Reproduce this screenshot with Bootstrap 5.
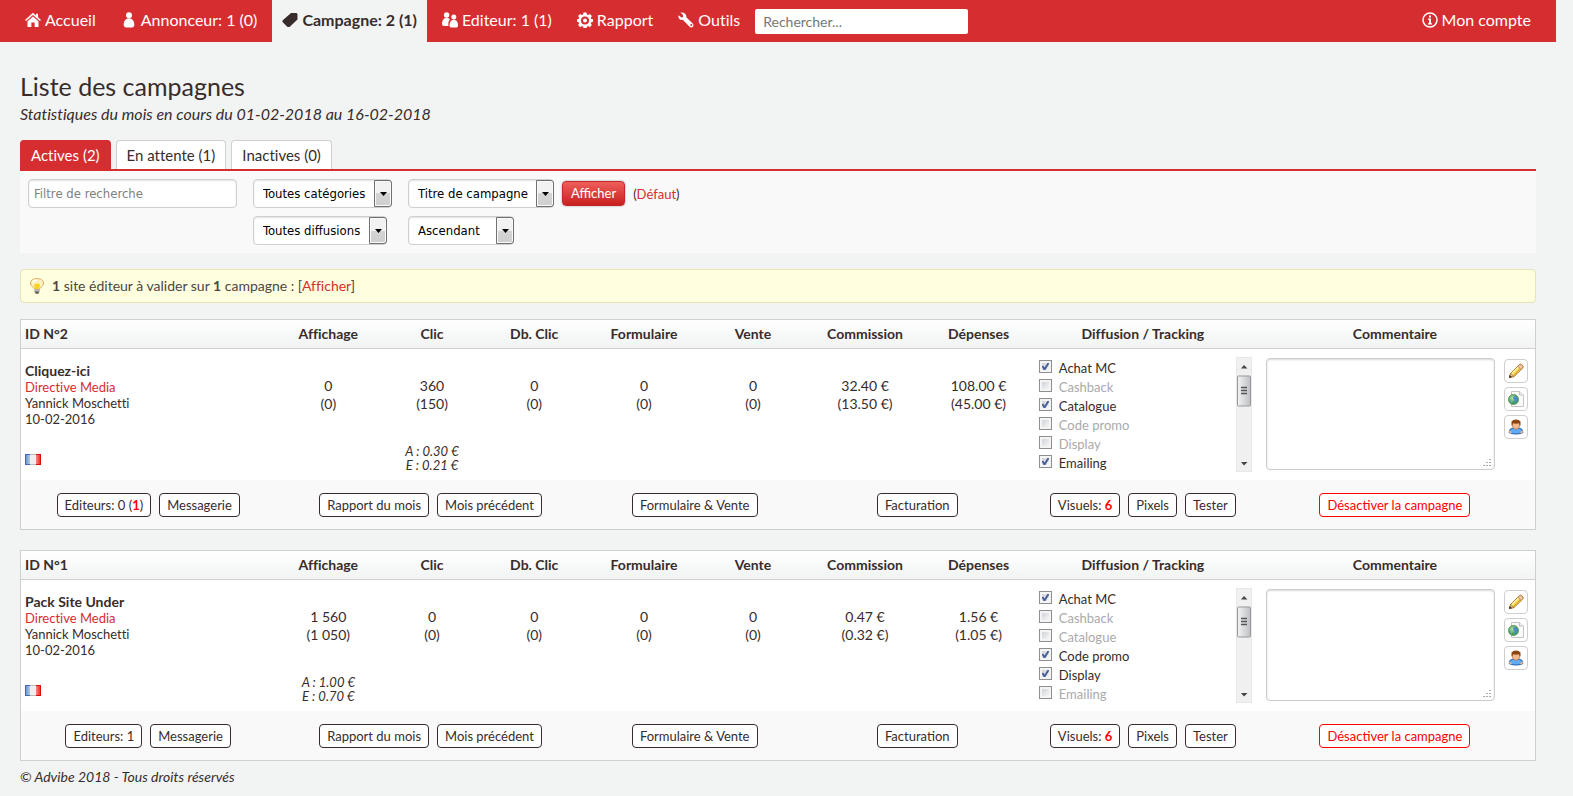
<!DOCTYPE html>
<html lang="fr">
<head>
<meta charset="utf-8">
<meta name="viewport" content="width=device-width, initial-scale=1">
<title>Advibe - Liste des campagnes</title>
<link href="https://cdn.jsdelivr.net/npm/bootstrap@5.3.0/dist/css/bootstrap.min.css" rel="stylesheet">
<style>
:root { --red: #d62d30; --ink: #382c2b; --line: #cfcfcf; --paper: #f1f4f3; }
body { background: var(--paper); color: var(--ink); font: 13px/16px Lato, sans-serif; font-variant-ligatures: none; }
a { color: var(--red); text-decoration: none; }
.page { margin-right: 17px; }
.topbar { background: var(--red); min-height: 42px; padding: 0 15px; }
.topbar .navbar-nav { gap: 5px; }
.topbar .nav-link, .topbar .navbar-nav .nav-link { color: #fff; font-size: 16px; line-height: 40px; height: 42px; padding: 0 10px 2px; display: flex; align-items: center; gap: 4px; white-space: nowrap; }
.topbar .navbar-nav .nav-link.active { background: var(--paper); color: var(--ink); font-weight: 700; }
.topbar svg { width: 16px; height: 16px; fill: currentColor; }
.topsearch { width: 213px; height: 25px; border: 0; border-radius: 2px; padding: 0 8px; font-size: 14px; }
.topsearch::placeholder { color: #777; }
.content { padding: 30px 20px 9px; }
h1 { font-size: 25px; line-height: 28px; font-weight: 400; margin: 0 0 3px; }
.subtitle { font-size: 16px; line-height: 22px; font-style: italic; margin: 0 0 15px; }
.statustabs { border-bottom: 2px solid var(--red); gap: 5px; }
.statustabs .nav-link { background: #fff; color: var(--ink); border: 1px solid var(--line); border-bottom: 0; border-radius: 4px 4px 0 0; font-size: 15px; line-height: 28px; height: 29px; padding: 0 10px; margin: 0; }
.statustabs .nav-link.active { background: var(--red); border-color: var(--red); color: #fff; }
.filters { background: #f9f9f9; padding: 8px; display: grid; grid-template-columns: 209px max-content 1fr; gap: 8px 16px; justify-items: start; }
.filters .second { grid-column-start: 2; }
.filters input, .picker select { font: 13px/18px "DejaVu Sans Condensed", sans-serif; height: 29px; border: 1px solid var(--line); border-radius: 4px; background: #fff; box-shadow: inset 0 1px 2px rgba(0,0,0,.12); }
.filters input { width: 100%; padding: 0 5px; }
.filters input::placeholder { color: #808080; }
.picker { position: relative; display: inline-block; }
.picker select { appearance: none; color: #000; padding: 0 25px 0 9px; display: block; }
.picker::after { content: ""; position: absolute; pointer-events: none; right: 0; top: 1px; width: 18px; height: 27px; border: 1px solid #707070; border-radius: 0 3px 3px 0; box-shadow: inset 0 0 0 1px #fafafa;
  background: url("data:image/svg+xml,%3Csvg xmlns='http://www.w3.org/2000/svg' width='8' height='4'%3E%3Cpath d='M0 0h7L3.500 4z'/%3E%3C/svg%3E") 5px 11px no-repeat, linear-gradient(#f2f2f2 50%, #d4d4d4 50%, #cfcfcf); }
.btn-show { background: linear-gradient(#ee5f5b, #c9201f); border: 1px solid #c4282b; color: #fff; font-size: 13px; line-height: 23px; height: 25px; padding: 0 8px; border-radius: 4px; box-shadow: 0 0 2px rgba(0,0,0,.4); }
.btn-show:hover { background: #c9201f; color: #fff; }
.notice { background: #ffffdf; border: 1px solid #e4e4b4; border-radius: 4px; color: #4c4644; height: 34px; padding: 0 8px; margin: 16px 0; font-size: 14px; gap: 7px; }
.campaign { table-layout: fixed; width: 100%; border: 1px solid var(--line); border-collapse: separate; border-spacing: 0; background: #fff; margin-bottom: 20px; }
.campaign th { height: 29px; padding: 0 4px; font-size: 14px; font-weight: 700; text-align: center; border-bottom: 1px solid var(--line); background: linear-gradient(#fff, var(--paper)); white-space: nowrap; }
.campaign th:first-child { text-align: left; }
.campaign td { padding: 0 4px; text-align: center; vertical-align: middle; }
.campaign .stats td { height: 90px; font-size: 14px; line-height: 18px; padding-top: 2px; }
.campaign .stats .who { text-align: left; font-size: 13px; line-height: 16px; }
.who b { font-size: 14px; line-height: 16px; }
.campaign .rates td { height: 41px; padding-bottom: 3px; font-size: 13px; line-height: 14px; font-style: italic; }
.campaign .rates td:first-child { text-align: left; }
.actions td { height: 49px; background: #f9f9f9; }
.btnrow { display: flex; justify-content: center; gap: 8px; }
.btn-line { background: #fff; color: var(--ink); border: 1px solid var(--ink); border-radius: 4px; font-size: 13px; line-height: 22px; height: 24px; padding: 0 7px; white-space: nowrap; }
.btn-line b { color: red; }
.btn-off { color: red; border-color: red; }
.campaign .stats .top { vertical-align: top; padding: 8px 3px 0 2px; }
.channels { display: flex; justify-content: space-between; height: 115px; overflow: hidden; padding-left: 6px; }
.channels ul { list-style: none; margin: 0; padding: 2px 0 0; text-align: left; }
.channels li { height: 19px; display: flex; gap: 7px; }
.channels label { line-height: 19px; font-size: 13px; color: #aaa; }
.channels .tick { appearance: none; width: 13px; height: 13px; margin: 1px 0 0; border: 1px solid #8e8f8f; border-radius: 0; background: linear-gradient(135deg, #c6cad0, #fff); box-shadow: inset 0 0 0 2px #f4f4f4; }
.channels .tick:checked { background: url("data:image/svg+xml,%3Csvg xmlns='http://www.w3.org/2000/svg' width='11' height='11'%3E%3Cpath d='M2.500 5l2 3.500L8.500 2' fill='none' stroke='%234a5f97' stroke-width='2'/%3E%3C/svg%3E"), linear-gradient(135deg, #c6cad0, #fff); }
.channels .tick:checked + label { color: var(--ink); }
.scroller { width: 16px; background: #f0f0f0; border: 1px solid #e8e8e8; }
.scroller svg { display: block; width: 14px; height: 113px; }
.comment { display: flex; gap: 9px; padding: 1px 4px 0 9px; }
.comment textarea { flex: 1; min-width: 0; height: 112px; border: 1px solid #ccc; border-radius: 4px; resize: none; padding: 4px; box-shadow: inset 0 1px 2px rgba(0,0,0,.15);
  background: #fff url("data:image/svg+xml,%3Csvg xmlns='http://www.w3.org/2000/svg' width='8' height='8' fill='%23aaa'%3E%3Cpath d='M6 0h2v1H6zM3 3h2v1H3zM6 3h2v1H6zM0 6h2v1H0zM3 6h2v1H3zM6 6h2v1H6z'/%3E%3C/svg%3E") right 3px bottom 2px no-repeat; }
.tools { display: flex; flex-direction: column; gap: 4px; padding-top: 1px; }
.tools button { width: 24px; height: 24px; padding: 3px; border: 1px solid var(--line); border-radius: 4px; background: #fff; line-height: 0; }
.tools svg { width: 16px; height: 16px; }
.legal { font-size: 14px; line-height: 20px; font-style: italic; margin-top: -14px; }
</style>
</head>
<body>
<svg width="0" height="0" class="position-absolute" aria-hidden="true">
  <defs>
    <linearGradient id="thumb"><stop offset="0" stop-color="#f4f4f4"/><stop offset=".5" stop-color="#d9dadc"/><stop offset="1" stop-color="#bdbfc2"/></linearGradient>
    <linearGradient id="blue"><stop offset="0" stop-color="#5f86cf"/><stop offset="1" stop-color="#b5c9ee"/></linearGradient>
    <linearGradient id="redband"><stop offset="0" stop-color="#f48c85"/><stop offset="1" stop-color="#ea1f1a"/></linearGradient>
    <radialGradient id="globe" cx=".4" cy=".35"><stop offset="0" stop-color="#b5e3a4"/><stop offset="1" stop-color="#3f9a52"/></radialGradient>
  </defs>
  <symbol id="i-flag" viewBox="0 0 16 11">
    <path d="M0 0h5v11H0z" fill="url(#blue)"/><path d="M5 0h6v11H5z" fill="#eee"/><path d="M11 0h5v11h-5z" fill="url(#redband)"/>
    <path d="M5 .5H.5v10H5" fill="none" stroke="#4368ba"/><path d="M5 .5h6M5 10.500h6" stroke="#bbb"/><path d="M11 .5h4.500v10H11" fill="none" stroke="#dd0b08"/>
  </symbol>
  <symbol id="i-pencil" viewBox="0 0 16 16">
    <path d="M1.500 14.500l1-4L11 2q1.500-1.500 3.200.2t.2 3.200L6 13.500z" fill="#f6d555" stroke="#b07a26"/>
    <path d="M4 10.500L11.500 3" stroke="#fff3a8" stroke-width="1.500"/><path d="M5.500 12.500L13 5" stroke="#e0a330"/>
    <path d="M11 2q1.500-1.500 3.200.2t.2 3.200L13 6.500 9.900 3.200z" fill="#f4c9a8" stroke="#b5793f" stroke-width=".8"/>
    <path d="M2.500 10.500L6 13.500l-4.500 1z" fill="#efcfa0" stroke="#8a6128" stroke-width=".6"/><path d="M1 15l.8-3 2.200 2z" fill="#3c2a14"/>
  </symbol>
  <symbol id="i-web" viewBox="0 0 16 16">
    <path d="M3.500.5h8L15.500 4v11.500h-12z" fill="#fafafa" stroke="#c4c4c4"/><path d="M11.500.5V4h4" fill="#eee" stroke="#c4c4c4"/>
    <circle cx="5.500" cy="8.500" r="5" fill="url(#globe)" stroke="#5c9a66"/><path d="M6 5l3 1 .5 3-2 3L6 11l.5-2L5 7z" fill="#4a8ad6"/><path d="M2 9l2 .5 0 2.500-1-.8z" fill="#6fa8e4"/>
  </symbol>
  <symbol id="i-user" viewBox="0 0 16 16">
    <path d="M1 13.500Q1 9.500 5 9h6q4 .5 4 4.500-2 1.500-7 1.500t-7-1.500z" fill="#5eaaf5" stroke="#2a62ae"/>
    <path d="M1 11.500q0 3 2 3l1-1.500zM15 11.500q0 3-2 3L12 13z" fill="#f0b487"/>
    <path d="M4.500 4h7v3.500q-1 2.800-3.500 2.800T4.500 7.500z" fill="#f3b98c" stroke="#a9632d" stroke-width=".6"/>
    <path d="M3.500 6.500v-4Q5 .5 8 .5t4.500 2v4l-1-.5-.5-2Q8 5 5 4l-.5 2z" fill="#8a4513"/>
  </symbol>
  <symbol id="i-scroll" viewBox="0 0 14 113">
    <path d="M4 10.500L7 7l3.500 3.500zM4 104l3 3.500 3.500-3.500z" fill="#444"/>
    <rect x=".5" y="18" width="13" height="30" rx="1" fill="url(#thumb)" stroke="#98999b"/>
    <path d="M4 29.500h6M4 32.500h6M4 35.500h6" stroke="#555" stroke-width="1.500"/>
  </symbol>
</svg>

<div class="page">
<nav class="topbar navbar navbar-expand">
  <div class="navbar-nav align-items-center">
    <a class="nav-link" href="#"><svg viewBox="0 0 16 16"><path d="M8 .8l3 2.700V1.800h2v3.500L16 8l-1 1.100L8 3 1 9.100 0 8z"/><path d="M8 4.500l5.500 4.700V15H9.600v-4.500H6.400V15H2.500V9.200z"/></svg>Accueil</a>
    <a class="nav-link" href="#"><svg viewBox="0 0 16 16"><circle cx="8" cy="3.300" r="3"/><path d="M8 6.200c3.500 0 5.300 3.500 5.300 6.300 0 2-1 3-2.300 3H5c-1.300 0-2.300-1-2.300-3C2.700 9.700 4.500 6.200 8 6.200z"/></svg>Annonceur: 1 (0)</a>
    <a class="nav-link active" href="#" aria-current="page"><svg viewBox="0 0 16 16"><path d="M9 1h5.500L15.500 2v5.500L7.500 15h-2L.5 10V8.500z"/></svg>Campagne: 2 (1)</a>
    <a class="nav-link" href="#"><svg viewBox="0 0 16 16"><circle cx="4.600" cy="3" r="2.700"/><path d="M4.600 5.700c1.500 0 2.500.7 3.300 1.800C6.500 9 6 11 6.500 14H2C.7 14 0 13.300 0 12c0-2.800 1.500-6.300 4.600-6.300z"/><circle cx="11.800" cy="5" r="2.500"/><path d="M11.800 7.700c2.900 0 4.200 3 4.200 5.200 0 1.800-.8 2.600-2 2.600H9.500c-1.200 0-2-.8-2-2.600 0-2.200 1.400-5.200 4.300-5.200z"/></svg>Editeur: 1 (1)</a>
    <a class="nav-link" href="#"><svg viewBox="0 0 16 16"><path fill-rule="evenodd" d="M6.500.5h3l.4 2 1.200.5 1.700-1.100 2.100 2.100L13.800 5.700l.5 1.200 2 .3v2.600l-2 .4-.5 1.200 1.100 1.700-2.100 2.100-1.700-1.100-1.200.5-.4 2h-3l-.4-2-1.200-.5-1.700 1.100-2.100-2.100 1.100-1.700-.5-1.200-2-.4V7.200l2-.3.5-1.200L1.100 4l2.100-2.100L4.900 3l1.200-.5zM8 4.500a4 4 0 100 8 4 4 0 000-8zm0 2a2 2 0 110 4 2 2 0 010-4z"/></svg>Rapport</a>
    <a class="nav-link" href="#"><svg viewBox="0 0 16 16"><path fill-rule="evenodd" d="M2.500.6L5 3v2L3.500 5.500.6 3.200C-.3 6 1.500 8.600 5 8l6.600 6.800c1 .9 2.400.8 3.300-.1.800-.9.800-2.100 0-3L8.300 5.300C8.700 2 5.800-.3 2.500.6zM13.300 12a1 1 0 110 2 1 1 0 010-2z"/></svg>Outils</a>
    <input class="topsearch" type="search" placeholder="Rechercher..." aria-label="Rechercher">
  </div>
  <a class="nav-link ms-auto" href="#"><svg viewBox="0 0 16 16"><circle cx="8" cy="8" r="7" fill="none" stroke="currentColor" stroke-width="1.500"/><path d="M7 3.500h2v2H7zM6 6.500h3v4.700h1v1.300H6v-1.300h1V7.800H6z"/></svg>Mon compte</a>
</nav>

<main class="content">
  <h1>Liste des campagnes</h1>
  <p class="subtitle">Statistiques du mois en cours du 01-02-2018 au 16-02-2018</p>

  <nav class="nav statustabs">
    <a class="nav-link active" href="#" aria-current="true">Actives (2)</a>
    <a class="nav-link" href="#">En attente (1)</a>
    <a class="nav-link" href="#">Inactives (0)</a>
  </nav>
  <form class="filters">
    <input type="text" placeholder="Filtre de recherche" aria-label="Filtre de recherche">
    <span class="picker"><select aria-label="Catégorie"><option>Toutes catégories</option></select></span>
    <div class="d-flex align-items-center">
      <span class="picker me-2"><select aria-label="Tri"><option>Titre de campagne</option></select></span>
      <button class="btn btn-show me-2" type="button">Afficher</button>
      <span>(<a href="#">Défaut</a>)</span>
    </div>
    <span class="picker second"><select aria-label="Diffusion"><option>Toutes diffusions</option></select></span>
    <span class="picker"><select aria-label="Ordre"><option>Ascendant</option><option>Descendant</option></select></span>
  </form>

  <div class="notice d-flex align-items-center" role="status">
    <svg width="16" height="16" viewBox="0 0 16 16" aria-hidden="true"><path d="M5.500 11C5 9 1.500 8.500 1.500 5 1.500 2 4.500.6 8 .6S14.500 2 14.500 5c0 3.500-3.500 4-4 6z" fill="#fdf0c4" stroke="#e0aa62"/><path d="M5.800 11L5 6.500q3-2 6 0L10.200 11z" fill="#fbd21d"/><path d="M4 4.500Q5 2.200 8 2.200" fill="none" stroke="#fff" stroke-width="1.500"/><path d="M5.500 11h5v3q-1 1.800-2.500 1.800T5.500 14z" fill="#8a8a84"/><path d="M5.500 12h5" stroke="#ddd"/><path d="M6.500 15h3" stroke="#333"/></svg>
    <span><b>1</b> site éditeur à valider sur <b>1</b> campagne : [<a href="#">Afficher</a>]</span>
  </div>

  <table class="campaign">
    <colgroup><col style="width:16.8%"><col style="width:7%"><col style="width:6.7%"><col style="width:6.8%"><col style="width:7.7%"><col style="width:6.7%"><col style="width:8.1%"><col style="width:6.9%"><col style="width:14.8%"><col style="width:18.5%"></colgroup>
    <thead><tr><th>ID N°2</th><th>Affichage</th><th>Clic</th><th>Db. Clic</th><th>Formulaire</th><th>Vente</th><th>Commission</th><th>Dépenses</th><th>Diffusion / Tracking</th><th>Commentaire</th></tr></thead>
    <tbody>
      <tr class="stats">
        <td class="who"><b>Cliquez-ici</b><br><a href="#">Directive Media</a><br>Yannick Moschetti<br>10-02-2016</td>
        <td>0<br>(0)</td><td>360<br>(150)</td><td>0<br>(0)</td><td>0<br>(0)</td><td>0<br>(0)</td><td>32.40 €<br>(13.50 €)</td><td>108.00 €<br>(45.00 €)</td>
        <td class="top" rowspan="2">
          <div class="channels">
            <ul>
              <li><input class="tick" type="checkbox" id="a1" checked><label for="a1">Achat MC</label></li>
              <li><input class="tick" type="checkbox" id="a2"><label for="a2">Cashback</label></li>
              <li><input class="tick" type="checkbox" id="a3" checked><label for="a3">Catalogue</label></li>
              <li><input class="tick" type="checkbox" id="a4"><label for="a4">Code promo</label></li>
              <li><input class="tick" type="checkbox" id="a5"><label for="a5">Display</label></li>
              <li><input class="tick" type="checkbox" id="a6" checked><label for="a6">Emailing</label></li>
            </ul>
            <div class="scroller" aria-hidden="true"><svg><use href="#i-scroll"/></svg></div>
          </div>
        </td>
        <td class="top" rowspan="2">
          <div class="comment">
            <textarea aria-label="Commentaire"></textarea>
            <div class="tools">
              <button type="button" aria-label="Modifier"><svg><use href="#i-pencil"/></svg></button>
              <button type="button" aria-label="Site"><svg><use href="#i-web"/></svg></button>
              <button type="button" aria-label="Annonceur"><svg><use href="#i-user"/></svg></button>
            </div>
          </div>
        </td>
      </tr>
      <tr class="rates"><td><svg width="16" height="11" role="img" aria-label="France"><use href="#i-flag"/></svg></td><td></td><td>A : 0.30 €<br>E : 0.21 €</td><td></td><td></td><td></td><td></td><td></td></tr>
      <tr class="actions">
        <td><div class="btnrow"><button type="button" class="btn btn-line">Editeurs: 0 (<b>1</b>)</button><button type="button" class="btn btn-line">Messagerie</button></div></td>
        <td colspan="3"><div class="btnrow"><button type="button" class="btn btn-line">Rapport du mois</button><button type="button" class="btn btn-line">Mois précédent</button></div></td>
        <td colspan="2"><div class="btnrow"><button type="button" class="btn btn-line">Formulaire &amp; Vente</button></div></td>
        <td colspan="2"><div class="btnrow"><button type="button" class="btn btn-line">Facturation</button></div></td>
        <td><div class="btnrow"><button type="button" class="btn btn-line">Visuels: <b>6</b></button><button type="button" class="btn btn-line">Pixels</button><button type="button" class="btn btn-line">Tester</button></div></td>
        <td><div class="btnrow"><button type="button" class="btn btn-line btn-off">Désactiver la campagne</button></div></td>
      </tr>
    </tbody>
  </table>

  <table class="campaign">
    <colgroup><col style="width:16.8%"><col style="width:7%"><col style="width:6.7%"><col style="width:6.8%"><col style="width:7.7%"><col style="width:6.7%"><col style="width:8.1%"><col style="width:6.9%"><col style="width:14.8%"><col style="width:18.5%"></colgroup>
    <thead><tr><th>ID N°1</th><th>Affichage</th><th>Clic</th><th>Db. Clic</th><th>Formulaire</th><th>Vente</th><th>Commission</th><th>Dépenses</th><th>Diffusion / Tracking</th><th>Commentaire</th></tr></thead>
    <tbody>
      <tr class="stats">
        <td class="who"><b>Pack Site Under</b><br><a href="#">Directive Media</a><br>Yannick Moschetti<br>10-02-2016</td>
        <td>1 560<br>(1 050)</td><td>0<br>(0)</td><td>0<br>(0)</td><td>0<br>(0)</td><td>0<br>(0)</td><td>0.47 €<br>(0.32 €)</td><td>1.56 €<br>(1.05 €)</td>
        <td class="top" rowspan="2">
          <div class="channels">
            <ul>
              <li><input class="tick" type="checkbox" id="b1" checked><label for="b1">Achat MC</label></li>
              <li><input class="tick" type="checkbox" id="b2"><label for="b2">Cashback</label></li>
              <li><input class="tick" type="checkbox" id="b3"><label for="b3">Catalogue</label></li>
              <li><input class="tick" type="checkbox" id="b4" checked><label for="b4">Code promo</label></li>
              <li><input class="tick" type="checkbox" id="b5" checked><label for="b5">Display</label></li>
              <li><input class="tick" type="checkbox" id="b6"><label for="b6">Emailing</label></li>
            </ul>
            <div class="scroller" aria-hidden="true"><svg><use href="#i-scroll"/></svg></div>
          </div>
        </td>
        <td class="top" rowspan="2">
          <div class="comment">
            <textarea aria-label="Commentaire"></textarea>
            <div class="tools">
              <button type="button" aria-label="Modifier"><svg><use href="#i-pencil"/></svg></button>
              <button type="button" aria-label="Site"><svg><use href="#i-web"/></svg></button>
              <button type="button" aria-label="Annonceur"><svg><use href="#i-user"/></svg></button>
            </div>
          </div>
        </td>
      </tr>
      <tr class="rates"><td><svg width="16" height="11" role="img" aria-label="France"><use href="#i-flag"/></svg></td><td>A : 1.00 €<br>E : 0.70 €</td><td></td><td></td><td></td><td></td><td></td><td></td></tr>
      <tr class="actions">
        <td><div class="btnrow"><button type="button" class="btn btn-line">Editeurs: 1</button><button type="button" class="btn btn-line">Messagerie</button></div></td>
        <td colspan="3"><div class="btnrow"><button type="button" class="btn btn-line">Rapport du mois</button><button type="button" class="btn btn-line">Mois précédent</button></div></td>
        <td colspan="2"><div class="btnrow"><button type="button" class="btn btn-line">Formulaire &amp; Vente</button></div></td>
        <td colspan="2"><div class="btnrow"><button type="button" class="btn btn-line">Facturation</button></div></td>
        <td><div class="btnrow"><button type="button" class="btn btn-line">Visuels: <b>6</b></button><button type="button" class="btn btn-line">Pixels</button><button type="button" class="btn btn-line">Tester</button></div></td>
        <td><div class="btnrow"><button type="button" class="btn btn-line btn-off">Désactiver la campagne</button></div></td>
      </tr>
    </tbody>
  </table>
  <footer class="legal">© Advibe 2018 - Tous droits réservés</footer>
</main>
</div>
<script src="https://cdn.jsdelivr.net/npm/bootstrap@5.3.0/dist/js/bootstrap.bundle.min.js"></script>
</body>
</html>
